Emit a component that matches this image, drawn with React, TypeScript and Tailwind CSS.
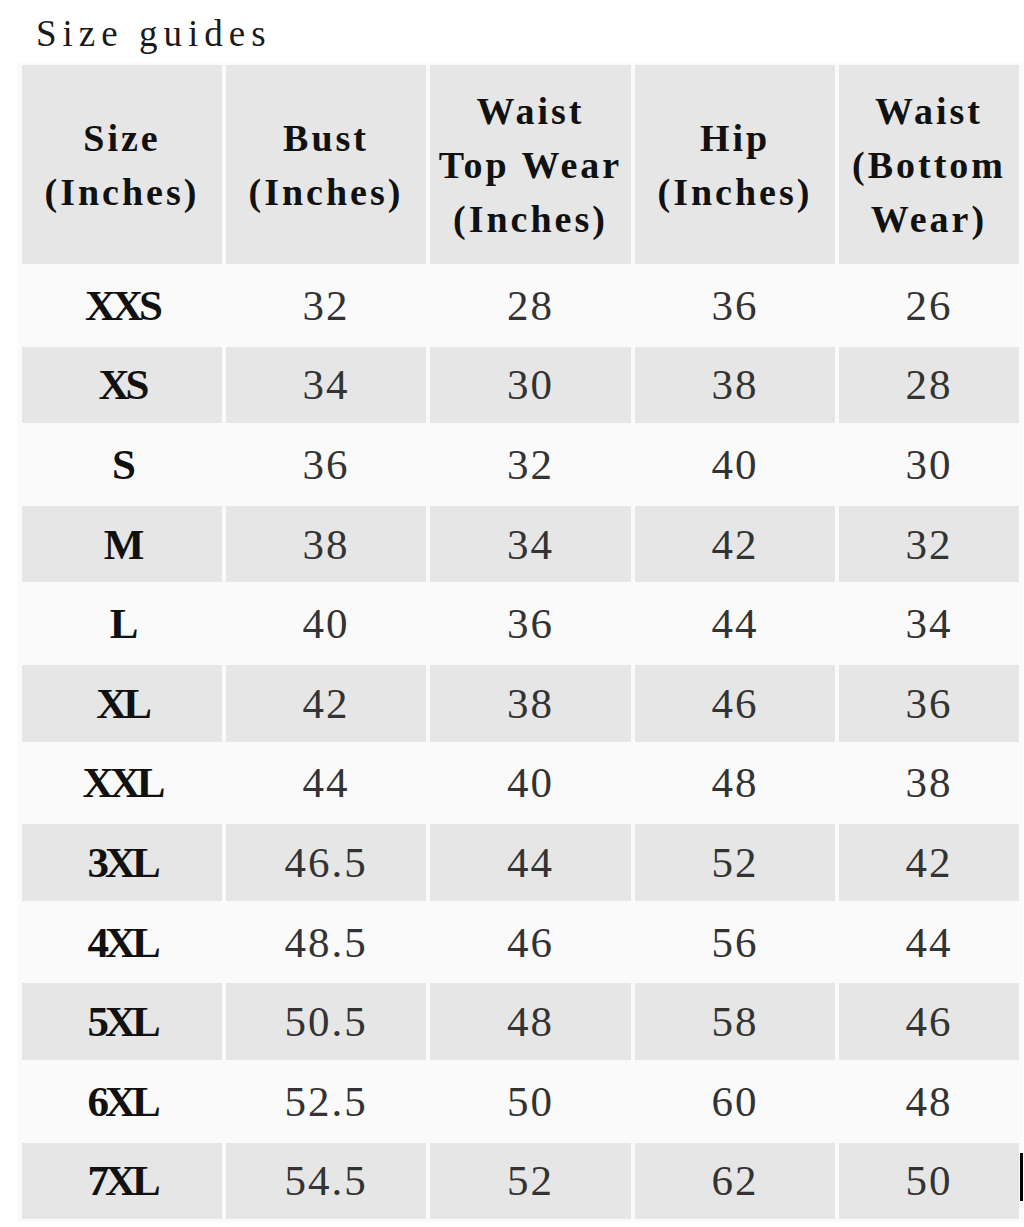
import React from "react";

const rows = [
  ["XXS", "32", "28", "36", "26"],
  ["XS", "34", "30", "38", "28"],
  ["S", "36", "32", "40", "30"],
  ["M", "38", "34", "42", "32"],
  ["L", "40", "36", "44", "34"],
  ["XL", "42", "38", "46", "36"],
  ["XXL", "44", "40", "48", "38"],
  ["3XL", "46.5", "44", "52", "42"],
  ["4XL", "48.5", "46", "56", "44"],
  ["5XL", "50.5", "48", "58", "46"],
  ["6XL", "52.5", "50", "60", "48"],
  ["7XL", "54.5", "52", "62", "50"],
];

const headers = [
  ["Size", "(Inches)"],
  ["Bust", "(Inches)"],
  ["Waist", "Top Wear", "(Inches)"],
  ["Hip", "(Inches)"],
  ["Waist", "(Bottom", "Wear)"],
];

const SizeGuide = () => {
  return (
    <div className="relative w-[1024px] h-[1227px] overflow-hidden bg-white text-[#1a1a1a] font-['Liberation_Serif',serif]">
      {/* Title */}
      <div className="h-[63px] pt-[4px] pl-[36px] flex items-center text-[37px] tracking-[6px] leading-none">
        Size guides
      </div>

      {/* Table */}
      <table className="ml-[18px] w-[1005px] table-fixed border-separate border-spacing-x-[4px] border-spacing-y-[3px] bg-[#fafafa] -mt-[1px]">
        <colgroup>
          <col className="w-[200px]" />
          <col className="w-[200px]" />
          <col className="w-[201px]" />
          <col className="w-[200px]" />
          <col className="w-[180px]" />
        </colgroup>
        <thead>
          <tr className="h-[199px]">
            {headers.map((lines, i) => (
              <th
                key={i}
                className="bg-[#e6e6e6] p-0 text-center align-middle font-bold text-[38px] tracking-[3px] leading-[54px] whitespace-nowrap text-[#111]"
              >
                {lines.map((l, j) => (
                  <div key={j}>{l}</div>
                ))}
              </th>
            ))}
          </tr>
        </thead>
        <tbody>
          {rows.map((row, i) => (
            <tr key={row[0]} className="h-[76.6px]">
              {row.map((cell, j) => (
                <td
                  key={j}
                  className={`p-0 text-center align-middle text-[43px] leading-none ${
                    i % 2 === 0 ? "bg-[#fafafa]" : "bg-[#e6e6e6]"
                  } ${
                    j === 0
                      ? "font-bold tracking-[-4px] text-[#111]"
                      : "tracking-[2px] text-[#333]"
                  }`}
                >
                  {cell}
                </td>
              ))}
            </tr>
          ))}
        </tbody>
      </table>

      {/* caret */}
      <div className="absolute left-[1020px] top-[1153px] w-[3px] h-[48px] bg-black" />
    </div>
  );
};

export default SizeGuide;
